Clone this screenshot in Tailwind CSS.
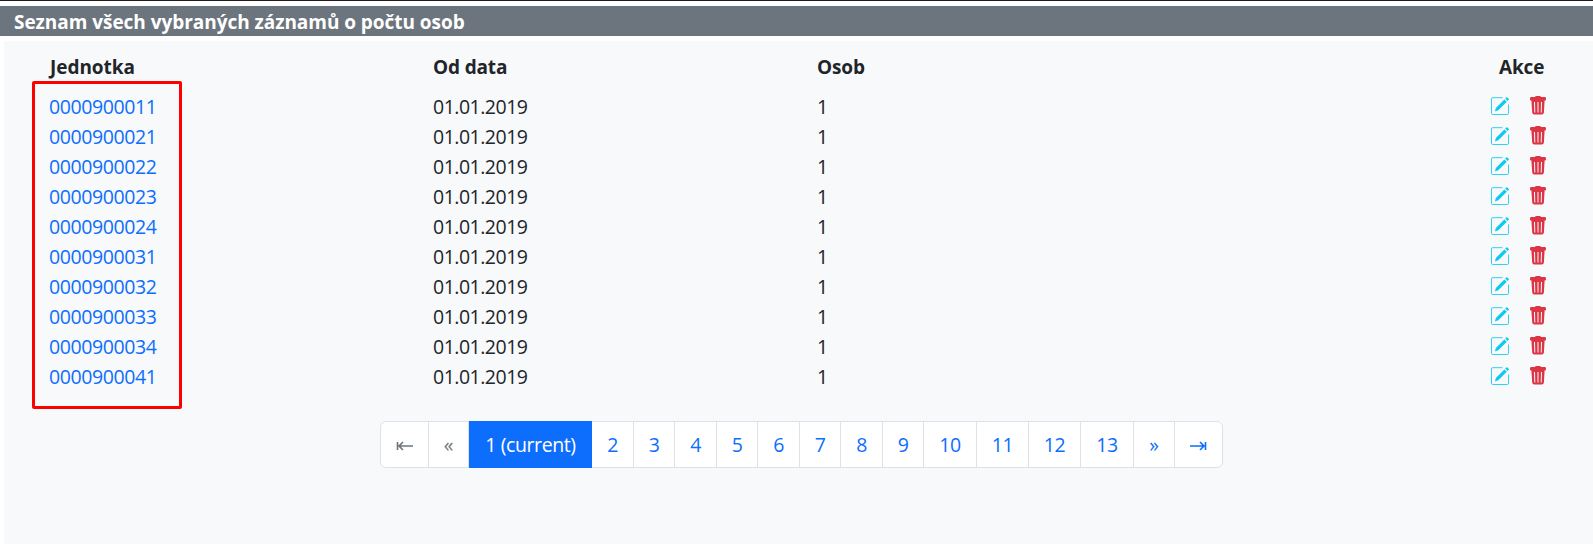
<!DOCTYPE html>
<html lang="cs">
<head>
<meta charset="utf-8">
<title>Seznam záznamů o počtu osob</title>
<script src="https://cdn.jsdelivr.net/npm/@tailwindcss/browser@4"></script>
</head>
<body class="h-[544px] overflow-hidden bg-white font-['Open_Sans','Noto_Sans',sans-serif] text-[19.5px] leading-[30px] tracking-[-0.4px] text-[#212529]">
<svg class="hidden">
  <symbol id="edit" viewBox="0 0 18 18">
    <path d="M11.500 .7H1.500Q.5.700.5 1.700v14.600q0 1.200 1.200 1.200h14.600q1.200 0 1.200-1.200V7.500" fill="none" stroke="currentColor" stroke-width="1" opacity=".85"/>
    <path d="M3.900 14.500l1-3.600 8.500-8.500 2.400 2.400-8.500 8.500zM14.200 1.600l1-1q.6-.6 1.200 0l1.200 1.200q.6.600 0 1.200l-1 1z" fill="currentColor"/>
  </symbol>
  <symbol id="trash" viewBox="0 0 16 19">
    <path fill="currentColor" fill-rule="evenodd" d="M1.300 1.100H5q.3-1.100 1.100-1.100h3.800q.8 0 1.100 1.100h3.700q1.300 0 1.300 1.300v1.100q0 1-1 1h-.4l-.7 12.100q-.2 1.900-2.100 1.900H4.300q-1.900 0-2.100-1.900L1.400 4.500H1q-1 0-1-1V2.400q0-1.300 1.300-1.300zM4 5.900l.3 10.500h1L5 5.900zM7.500 5.900v10.500h1V5.900zM11 5.900l-.3 10.500h1L12 5.900z"/>
  </symbol>
</svg>
<div class="h-px bg-[#1b1b24]"></div>
<header class="mt-[5px] h-[30px] bg-[#6c757d] pl-[14px] text-[19px] font-bold tracking-[-0.04px] whitespace-nowrap leading-[32px] text-white">Seznam všech vybraných záznamů o počtu osob</header>
<main class="relative mt-[5px] ml-1 h-[503px] bg-[#f8f9fb] pt-[11px] pl-[45px]">
  <div class="flex h-10 text-[19px] font-bold tracking-[-0.15px]">
    <div class="w-[384px] pl-px tracking-[-0.05px]">Jednotka</div><div class="w-[384px]">Od data</div><div class="w-[682px]">Osob</div><div>Akce</div>
  </div>
  <div id="rows"></div>
  <div class="absolute top-[40px] left-[28px] h-[328px] w-[150px] rounded-[2px] border-3 border-[#ff0000]"></div>
  <nav id="pages" class="mt-[29px] ml-[331px] flex h-[47px] w-[843px] rounded-md border border-[#dee2e6] bg-white text-center leading-[45px] text-[#0d6efd]"></nav>
</main>
<script>
const units = ['0000900011','0000900021','0000900022','0000900023','0000900024','0000900031','0000900032','0000900033','0000900034','0000900041'];
document.getElementById('rows').innerHTML = units.map(u => `
  <div class="flex h-[30px]">
    <a class="w-[384px] text-[#0d6efd]">${u}</a><div class="w-[384px] tracking-[-0.5px]">01.01.2019</div><div class="w-[674px]">1</div>
    <svg class="mt-[5px] h-[18px] w-[18px] text-[#0dcaf0]"><use href="#edit"/></svg>
    <svg class="mt-1 ml-[21px] h-[19px] w-4 text-[#dc3545]"><use href="#trash"/></svg>
  </div>`).join('');
const first = `<svg class="mx-auto mt-[18px] h-3 w-[18px]" viewBox="0 0 18 12" fill="none" stroke="currentColor" stroke-width="1.600"><path d="M1.500 2v8M17 6H3M7 2L3 6l4 4"/></svg>`;
const last = `<svg class="mr-auto ml-[14px] mt-[18px] h-3 w-[18px]" viewBox="0 0 18 12" fill="none" stroke="currentColor" stroke-width="1.600"><path d="M16.500 2v8M1 6h14M11 2l4 4-4 4"/></svg>`;
const pages = [[first,48],['«',40],['1 (current)',123],['2',42],['3',41],['4',42],['5',41],['6',42],['7',41],['8',42],['9',41],['10',53],['11',52],['12',52],['13',53],['»',41],[last,47]];
document.getElementById('pages').innerHTML = pages.map(([t, w], i) => {
  const c = i < 2 ? 'shrink-0 border-r border-[#dee2e6] text-[#6c757d]'
    : i === 2 ? 'shrink-0 -my-px h-[47px] bg-[#0d6efd] text-white leading-[47px] whitespace-nowrap'
    : i === 16 ? 'shrink-0' : 'shrink-0 border-r border-[#dee2e6]';
  return `<a class="${c}" style="width:${w}px">${t}</a>`;
}).join('');
</script>
</body>
</html>
